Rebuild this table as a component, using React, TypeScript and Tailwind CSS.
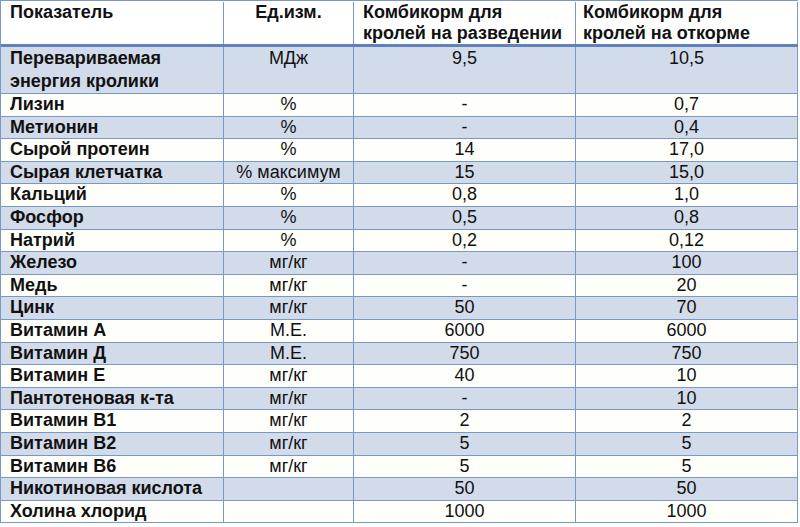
const rows: [string, string, string, string][] = [
  ["Лизин", "%", "-", "0,7"],
  ["Метионин", "%", "-", "0,4"],
  ["Сырой протеин", "%", "14", "17,0"],
  ["Сырая клетчатка", "% максимум", "15", "15,0"],
  ["Кальций", "%", "0,8", "1,0"],
  ["Фосфор", "%", "0,5", "0,8"],
  ["Натрий", "%", "0,2", "0,12"],
  ["Железо", "мг/кг", "-", "100"],
  ["Медь", "мг/кг", "-", "20"],
  ["Цинк", "мг/кг", "50", "70"],
  ["Витамин А", "М.Е.", "6000", "6000"],
  ["Витамин Д", "М.Е.", "750", "750"],
  ["Витамин Е", "мг/кг", "40", "10"],
  ["Пантотеновая к-та", "мг/кг", "-", "10"],
  ["Витамин В1", "мг/кг", "2", "2"],
  ["Витамин В2", "мг/кг", "5", "5"],
  ["Витамин В6", "мг/кг", "5", "5"],
  ["Никотиновая кислота", "", "50", "50"],
  ["Холина хлорид", "", "1000", "1000"],
];

const grid = "grid grid-cols-[223px_130px_222px_222px]";
const cell = "border-r border-[#7a98c6] overflow-hidden whitespace-nowrap";

export default function App() {
  return (
    <main className="h-[527px] w-[800px] overflow-hidden bg-white font-['Liberation_Sans',Arial,sans-serif] text-[18px] text-[#111]">
      <div className="w-[798px] border-l border-t border-[#7a98c6]">
        <div className={`${grid} h-[46px] border-b-[3px] border-[#5f82b8] bg-white pt-[1px] font-bold leading-[21px]`}>
          <div className={`${cell} px-[9px]`}>Показатель</div>
          <div className={`${cell} text-center`}>Ед.изм.</div>
          <div className={`${cell} px-[9px]`}>
            Комбикорм для
            <br />
            кролей на разведении
          </div>
          <div className={`${cell} px-[7px]`}>
            Комбикорм для
            <br />
            кролей на откорме
          </div>
        </div>
        <div className={`${grid} h-[47px] border-b border-[#7a98c6] bg-[#d2dbea] leading-[23px]`}>
          <div className={`${cell} px-[9px] font-bold`}>
            Перевариваемая
            <br />
            энергия кролики
          </div>
          <div className={`${cell} text-center`}>МДж</div>
          <div className={`${cell} text-center`}>9,5</div>
          <div className={`${cell} text-center`}>10,5</div>
        </div>
        {rows.map((r, i) => (
          <div
            key={r[0]}
            className={`${grid} h-[22.6px] border-b border-[#7a98c6] leading-[21.6px] ${i % 2 === 1 ? "bg-[#d2dbea]" : "bg-[#fefefb]"}`}
          >
            <div className={`${cell} px-[9px] font-bold`}>{r[0]}</div>
            <div className={`${cell} text-center`}>{r[1]}</div>
            <div className={`${cell} text-center`}>{r[2]}</div>
            <div className={`${cell} text-center`}>{r[3]}</div>
          </div>
        ))}
      </div>
    </main>
  );
}
